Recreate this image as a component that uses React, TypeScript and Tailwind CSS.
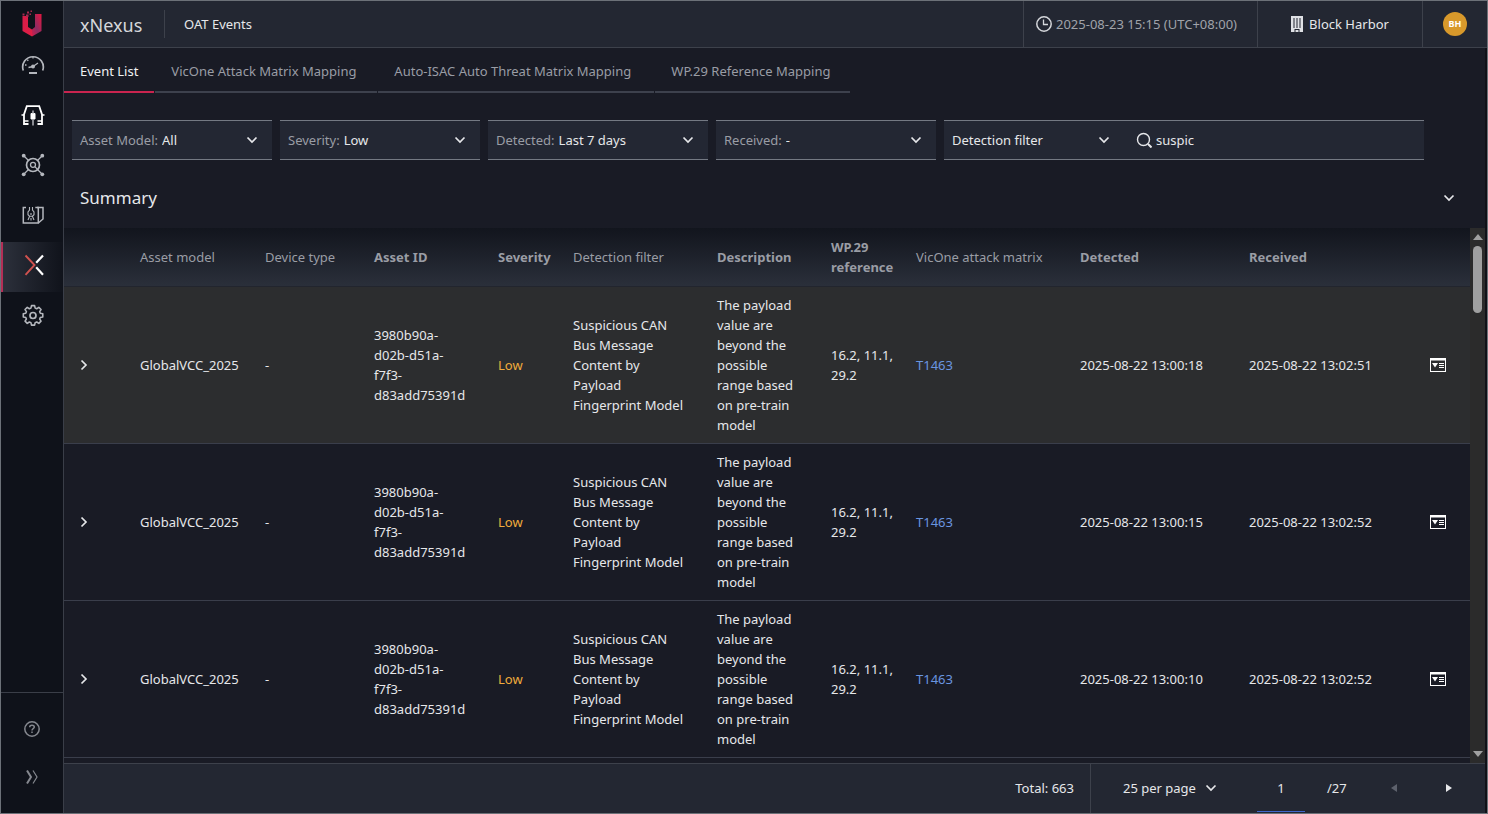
import { useState } from 'react';
import type { ReactNode } from 'react';

interface OatEvent {
  id: number;
  model: string;
  device: string;
  assetId: string;
  severity: string;
  filter: string;
  description: string;
  wp29: string;
  matrix: string;
  detected: string;
  received: string;
}

const BASE_EVENT = {
  model: 'GlobalVCC_2025',
  device: '-',
  assetId: '3980b90a-d02b-d51a-f7f3-d83add75391d',
  severity: 'Low',
  filter: 'Suspicious CAN Bus Message Content by Payload Fingerprint Model',
  description: 'The payload value are beyond the possible range based on pre-train model',
  wp29: '16.2, 11.1, 29.2',
  matrix: 'T1463',
};

const EVENTS: OatEvent[] = [
  { id: 1, ...BASE_EVENT, detected: '2025-08-22 13:00:18', received: '2025-08-22 13:02:51' },
  { id: 2, ...BASE_EVENT, detected: '2025-08-22 13:00:15', received: '2025-08-22 13:02:52' },
  { id: 3, ...BASE_EVENT, detected: '2025-08-22 13:00:10', received: '2025-08-22 13:02:52' },
];

const TABS = [
  { name: 'Event List', width: 'min-w-[90px]' },
  { name: 'VicOne Attack Matrix Mapping', width: 'min-w-[222px]' },
  { name: 'Auto-ISAC Auto Threat Matrix Mapping', width: 'min-w-[276px]' },
  { name: 'WP.29 Reference Mapping', width: 'min-w-[195px]' },
];

const COLUMNS = [
  { label: '', width: 'w-[68px]', bold: false },
  { label: 'Asset model', width: 'w-[125px]', bold: false },
  { label: 'Device type', width: 'w-[109px]', bold: false },
  { label: 'Asset ID', width: 'w-[124px]', bold: true },
  { label: 'Severity', width: 'w-[75px]', bold: true },
  { label: 'Detection filter', width: 'w-[144px]', bold: false },
  { label: 'Description', width: 'w-[114px]', bold: true },
  { label: 'WP.29 reference', width: 'w-[85px]', bold: true },
  { label: 'VicOne attack matrix', width: 'w-[164px]', bold: false },
  { label: 'Detected', width: 'w-[169px]', bold: true },
  { label: 'Received', width: 'w-[181px]', bold: true },
  { label: '', width: 'w-[48px]', bold: false },
];

function Chevron({ className = '' }: { className?: string }) {
  return (
    <svg viewBox="0 0 12 12" className={`size-3 shrink-0 ${className}`} fill="none" stroke="currentColor" strokeWidth="1.7">
      <path d="M1.5 3.5 6 8l4.5-4.5" />
    </svg>
  );
}

function Logo() {
  return (
    <svg viewBox="0 0 20 27" className="h-[27px] w-5">
      <defs>
        <linearGradient id="logo-left" x1="0" y1="0" x2="1" y2="1">
          <stop offset="0" stopColor="#d91c48" />
          <stop offset="1" stopColor="#e01f45" />
        </linearGradient>
        <linearGradient id="logo-right" x1="1" y1="0" x2="0" y2="1">
          <stop offset="0" stopColor="#e5173f" />
          <stop offset="0.6" stopColor="#8c2c63" />
          <stop offset="1" stopColor="#d91c48" />
        </linearGradient>
      </defs>
      <path d="M0.5 6H6v11l4 2.500V26.500L0.500 21z" fill="url(#logo-left)" />
      <path d="M13 4h6.500v17L10 26.500v-7l3-2.500z" fill="url(#logo-right)" />
      <path d="M0.5 3.5h2v2h-2zM4 4.500h2.500V7H4zM5 1.500h2v2H5zM8.500 0.500H10V2H8.500zM7.500 3.500H9V5H7.500z" fill="#a82a50" />
    </svg>
  );
}

function GaugeIcon() {
  return (
    <svg viewBox="0 0 24 24" className="size-6" fill="none" stroke="currentColor" strokeWidth="1.7">
      <path d="M2.3 17.500A10.300 10.300 0 1 1 21.700 17.500" />
      <path d="m12 13.500 5-3.500M7.500 14.500l4.500-1M4 12h1.500M12 4v1.500M6.300 6.800l1 1" strokeWidth="1.3" />
      <circle cx="12" cy="13.500" r="2" fill="currentColor" stroke="none" />
      <path d="M8 20h8" strokeWidth="2" />
    </svg>
  );
}

function VehicleIcon() {
  return (
    <svg viewBox="0 0 24 24" className="size-6 text-white" fill="none" stroke="currentColor" strokeWidth="1.8">
      <path d="M7.500 21H3v-9.500L5.800 3.200h12.400L21 11.500V21h-4.500" />
      <path d="M0.500 12H3M21 12h2.500M3 18h4.500M16.500 18H21" strokeWidth="1.7" />
      <path d="M10 10.500h4v5.500h-4z" fill="currentColor" strokeWidth="1" />
      <path d="M12 7.500v3M12 16v6.500" strokeWidth="1.6" stroke="#a7a9af" />
    </svg>
  );
}

function NetworkIcon() {
  return (
    <svg viewBox="0 0 24 24" className="size-6" fill="none" stroke="currentColor" strokeWidth="1.3">
      <circle cx="12" cy="12" r="6.500" strokeWidth="1.7" />
      <circle cx="12" cy="11.800" r="2.500" />
      <path d="m13.800 13.600 3 3M3 3l4.500 4.500M21 3l-4.500 4.500M3 21l4.500-4.500M21 21l-4.500-4.500" />
      <g fill="currentColor" stroke="none">
        <circle cx="2.700" cy="2.700" r="1.900" />
        <circle cx="21.300" cy="2.700" r="1.900" />
        <circle cx="2.700" cy="21.300" r="1.900" />
        <circle cx="21.300" cy="21.300" r="1.900" />
      </g>
    </svg>
  );
}

function ReportIcon() {
  return (
    <svg viewBox="0 0 24 24" className="size-6" fill="none" stroke="currentColor" strokeWidth="1.5">
      <path d="M5 4.500H2.300V20h15V4.500h-3" />
      <path d="M16 4.500h6V16l-4.700 4" />
      <path d="M8.500 4v3L7 9v2.700l1.500 1.500h3l1.500-1.500V9l-1.500-2V4M10 10v2M8.500 13.500 7 17M11.500 13.500 13 17M10 15v2.500" strokeWidth="1.1" />
    </svg>
  );
}

function NexusIcon() {
  return (
    <svg viewBox="0 0 24 24" className="size-6" fill="none" strokeWidth="1.9">
      <path d="M4.500 2.500 13.500 12l-9 9.800" stroke="#d0524f" />
      <path d="M22 2.500 15.200 9.800M15.200 14.300 22 21.800" stroke="#fff" strokeWidth="2.2" />
    </svg>
  );
}

function GearIcon() {
  return (
    <svg viewBox="0 0 24 24" className="size-6" fill="none" stroke="currentColor" strokeWidth="1.7" strokeLinejoin="round">
      <path d="M10.300 2.300h3.400l.6 2.700 1.700.7 2.300-1.500 2.400 2.400-1.500 2.300.7 1.700 2.700.6v3.400l-2.700.6-.7 1.700 1.500 2.300-2.400 2.400-2.300-1.500-1.700.7-.6 2.700h-3.400l-.6-2.700-1.700-.7-2.300 1.500-2.400-2.400 1.500-2.300-.7-1.700-2.700-.6v-3.400l2.700-.6.7-1.700-1.500-2.300 2.400-2.400 2.300 1.500 1.700-.7z" transform="translate(1 0.500) scale(0.920)" />
      <circle cx="12" cy="12.500" r="3" />
    </svg>
  );
}

function DetailIcon() {
  return (
    <svg viewBox="0 0 16 14" className="h-3.5 w-4">
      <path d="M0 0h16v14H0zM1 2.500V13h14V2.500z" fill="currentColor" fillRule="evenodd" />
      <path d="M2 5h6L5 9.500z" fill="currentColor" />
      <path d="M9 5h5v1H9zM9 7h5v1H9zM9 9h5v1H9z" fill="currentColor" />
    </svg>
  );
}

const NAV = [
  { label: 'Dashboard', icon: <GaugeIcon /> },
  { label: 'Vehicles', icon: <VehicleIcon /> },
  { label: 'Investigation', icon: <NetworkIcon /> },
  { label: 'Reports', icon: <ReportIcon /> },
  { label: 'xNexus', icon: <NexusIcon /> },
  { label: 'Settings', icon: <GearIcon /> },
];

function Sidebar() {
  return (
    <aside className="flex w-[63px] shrink-0 flex-col border-r border-[#3a3e48] bg-[#0f121a] text-[#b4b7bd]">
      <div className="flex h-[41px] items-center justify-center pt-1">
        <Logo />
      </div>
      <nav className="flex flex-1 flex-col">
        {NAV.map((item) => (
          <button
            key={item.label}
            type="button"
            aria-label={item.label}
            className={`flex h-[50px] items-center justify-center border-l-2 pb-1 ${
              item.label === 'xNexus'
                ? 'border-[#b32f56] bg-linear-to-r from-[#2c303b] to-[#10131b]'
                : 'border-transparent'
            }`}
          >
            {item.icon}
          </button>
        ))}
      </nav>
      <div className="flex h-[121px] flex-col items-center border-t border-[#3a3e48] pt-3 text-[#85888f]">
        <button type="button" aria-label="Help" className="flex size-12 items-center justify-center">
          <svg viewBox="0 0 16 16" className="size-4" fill="none" stroke="currentColor" strokeWidth="1.5">
            <circle cx="8" cy="8" r="7.200" />
            <path d="M5.700 6.300C5.700 5 6.700 4.200 8 4.200s2.300.8 2.300 1.900c0 1.500-2.300 1.600-2.300 3.300M8 10.500V12" />
          </svg>
        </button>
        <button type="button" aria-label="Expand menu" className="flex size-12 items-center justify-center">
          <svg viewBox="0 0 14 14" className="size-3.5" fill="none" stroke="currentColor" strokeWidth="1.2">
            <path d="m2 0.500 4 6.500-4 6.500" strokeWidth="2" />
            <path d="m8 0.500 4 6.500-4 6.500" />
          </svg>
        </button>
      </div>
    </aside>
  );
}

function TopBar() {
  return (
    <header className="flex h-[47px] shrink-0 items-stretch border-b border-[#3d414b] bg-[#232732] text-[#e6e7ea]">
      <div className="flex items-center pl-4">
        <h1 className="w-[84px] pt-0.5 text-[18px] text-[#d5d7db]">xNexus</h1>
        <div className="h-7 w-px bg-[#3d414b]" />
        <span className="pl-[19px]">OAT Events</span>
      </div>
      <div className="ml-auto flex w-[234px] items-center gap-1 border-l border-[#3d414b] pl-3">
        <svg viewBox="0 0 16 16" className="size-4 shrink-0 text-[#d5d7db]" fill="none" stroke="currentColor" strokeWidth="1.5">
          <circle cx="8" cy="8" r="7.200" />
          <path d="M7.500 3.500V8.500H12" strokeWidth="1.3" />
        </svg>
        <time className="whitespace-nowrap text-[#a0a3aa]">2025-08-23 15:15 (UTC+08:00)</time>
      </div>
      <button type="button" className="flex w-[165px] items-center justify-center gap-1.5 border-l border-[#3d414b]">
        <svg viewBox="0 0 12 16" className="h-4 w-3">
          <path d="M0 0h12v16H8.500v-3h-5v3H0zM2.500 2v10h1V2zM5.500 2v10h1V2zM8.500 2v10h1V2z" fill="#dfe1e5" fillRule="evenodd" />
          <path d="M4.500 14h3v2h-3z" fill="#dfe1e5" />
        </svg>
        <span>Block Harbor</span>
      </button>
      <div className="flex w-[65px] items-center justify-center border-l border-[#3d414b]">
        <button type="button" className="size-6 rounded-full bg-[#d8992b] text-[9px] font-bold text-white">
          BH
        </button>
      </div>
    </header>
  );
}

function FilterSelect({ id, label, value, width }: { id: string; label: string; value: string; width: string }) {
  return (
    <div className={`relative flex items-center gap-1 border-y border-[#747983] bg-[#232733] pl-2 ${width}`}>
      <label htmlFor={id} className="whitespace-nowrap text-[#9a9da5]">{label}</label>
      <select id={id} defaultValue={value} className="min-w-0 flex-1 appearance-none self-stretch bg-transparent pr-8 outline-none">
        <option>{value}</option>
      </select>
      <Chevron className="pointer-events-none absolute right-3.5" />
    </div>
  );
}

function Filters() {
  const [query, setQuery] = useState('suspic');

  return (
    <div className="flex h-10 shrink-0 gap-2 px-2">
      <FilterSelect id="asset-model" label="Asset Model:" value="All" width="w-[200px]" />
      <FilterSelect id="severity" label="Severity:" value="Low" width="w-[200px]" />
      <FilterSelect id="detected" label="Detected:" value="Last 7 days" width="w-[220px]" />
      <FilterSelect id="received" label="Received:" value="-" width="w-[220px]" />
      <div className="flex w-[480px] items-center border-y border-[#747983] bg-[#232733]">
        <div className="relative flex w-[180px] items-center self-stretch">
          <select aria-label="Search field" defaultValue="Detection filter" className="w-full appearance-none self-stretch bg-transparent pr-8 pl-2 outline-none">
            <option>Detection filter</option>
          </select>
          <Chevron className="pointer-events-none absolute right-3.5" />
        </div>
        <svg viewBox="0 0 16 16" className="mr-1 ml-3 size-4 shrink-0" fill="none" stroke="currentColor" strokeWidth="1.4">
          <circle cx="7.500" cy="7.500" r="6" />
          <path d="m12 12 3.500 3.500" strokeWidth="2" />
        </svg>
        <input
          type="text"
          aria-label="Search events"
          value={query}
          onChange={(e) => setQuery(e.target.value)}
          className="min-w-0 flex-1 self-stretch bg-transparent outline-none"
        />
      </div>
    </div>
  );
}

function Cell({ children, className = 'pr-6' }: { children?: ReactNode; className?: string }) {
  return <td className={`py-2 pl-2 align-middle ${className}`}>{children}</td>;
}

function EventTable() {
  return (
    <table className="w-full table-fixed border-separate border-spacing-0 text-left">
      <colgroup>
        {COLUMNS.map((col, i) => (
          <col key={i} className={col.width} />
        ))}
      </colgroup>
      <thead>
        <tr className="h-[59px] bg-linear-to-b from-[#12151d] to-[#2b303b] text-[#9a9da5]">
          {COLUMNS.map((col, i) => (
            <th
              key={i}
              scope="col"
              className={`border-b border-[#22252e] pl-2 ${col.bold ? 'font-bold' : 'font-normal'}`}
            >
              {col.label}
            </th>
          ))}
        </tr>
      </thead>
      <tbody className="[&_td]:border-b [&_td]:border-[#3a3e4b]">
        {EVENTS.map((event) => (
          <tr key={event.id} className={event.id === 1 ? 'bg-[#2c2d2f]' : ''}>
            <Cell>
              <button type="button" aria-label="Expand row" className="flex size-6 items-center justify-center">
                <Chevron className="-rotate-90" />
              </button>
            </Cell>
            <Cell className="pr-2">{event.model}</Cell>
            <Cell>{event.device}</Cell>
            <Cell className="pr-5">{event.assetId}</Cell>
            <Cell className="pr-2 text-[#efab3c]">{event.severity}</Cell>
            <Cell>{event.filter}</Cell>
            <Cell>{event.description}</Cell>
            <Cell className="pr-2">{event.wp29}</Cell>
            <Cell>
              <a href="#matrix" className="text-[#6a96e0]">{event.matrix}</a>
            </Cell>
            <Cell>{event.detected}</Cell>
            <Cell>{event.received}</Cell>
            <Cell className="pr-2">
              <button type="button" aria-label="Event details" className="flex text-white">
                <DetailIcon />
              </button>
            </Cell>
          </tr>
        ))}
      </tbody>
    </table>
  );
}

function ScrollTrack() {
  return (
    <div className="flex w-[15px] shrink-0 flex-col items-center bg-[#2b2b2b] py-1.5" aria-hidden="true">
      <svg viewBox="0 0 10 6" className="h-1.5 w-2.5 fill-[#9f9f9f]">
        <path d="M0 6h10L5 0z" />
      </svg>
      <div className="mt-1.5 h-[67px] w-[9px] rounded-full bg-[#9f9f9f]" />
      <svg viewBox="0 0 10 6" className="mt-auto h-1.5 w-2.5 fill-[#9f9f9f]">
        <path d="M0 0h10L5 6z" />
      </svg>
    </div>
  );
}

function Pagination() {
  const [page, setPage] = useState('1');

  return (
    <footer className="flex h-[50px] shrink-0 items-stretch justify-end border-t border-[#3d414b] bg-[#232732]">
      <div className="flex items-center border-r border-[#3d414b] pr-4 pb-0.5">Total: 663</div>
      <div className="relative flex w-[134px] items-center pb-0.5">
        <select aria-label="Rows per page" defaultValue="25 per page" className="w-full appearance-none self-stretch bg-transparent pl-8 outline-none">
          <option>25 per page</option>
        </select>
        <Chevron className="pointer-events-none absolute right-2" />
      </div>
      <input
        type="text"
        aria-label="Page"
        value={page}
        onChange={(e) => setPage(e.target.value)}
        className="mb-px ml-8 w-12 border-b border-[#3f66cc] bg-transparent text-center outline-none"
      />
      <span className="flex w-[61px] items-center pb-0.5 pl-[22px]">/27</span>
      <button type="button" aria-label="Previous page" disabled className="flex w-[55px] items-center justify-center pb-0.5 text-[#5d616c]">
        <svg viewBox="0 0 6 8" className="h-2 w-1.5 fill-current">
          <path d="M6 0v8L0 4z" />
        </svg>
      </button>
      <button type="button" aria-label="Next page" className="mr-[9px] flex w-[55px] items-center justify-center pb-0.5">
        <svg viewBox="0 0 6 8" className="h-2 w-1.5 fill-current">
          <path d="M0 0v8l6-4z" />
        </svg>
      </button>
    </footer>
  );
}

export default function App() {
  const [tab, setTab] = useState(TABS[0].name);

  return (
    <div className="flex h-screen overflow-hidden border border-[#6c7178] bg-[#191b25] font-['Noto_Sans',sans-serif] text-[13px] leading-5 text-[#e6e7ea]">
      <Sidebar />
      <div className="flex min-w-0 flex-1 flex-col">
        <TopBar />
        <div className="flex min-h-0 flex-1 flex-col border-r-2 border-[#101117]">
          <div role="tablist" className="flex shrink-0 gap-px">
            {TABS.map(({ name, width }) => (
              <button
                key={name}
                type="button"
                role="tab"
                aria-selected={tab === name}
                onClick={() => setTab(name)}
                className={`h-[45px] border-b-2 px-4 pt-0.5 text-left ${width} ${
                  tab === name ? 'border-[#c9244f] text-[#f0f1f3]' : 'border-[#3d414d] text-[#9a9da5]'
                }`}
              >
                {name}
              </button>
            ))}
          </div>
          <div className="shrink-0 pt-[27px]">
            <Filters />
          </div>
          <div className="flex h-[68px] shrink-0 items-center justify-between pt-4 pr-6 pb-2 pl-4">
            <h2 className="text-[17px]">Summary</h2>
            <button type="button" aria-label="Toggle summary" className="flex size-6 items-center justify-center">
              <Chevron />
            </button>
          </div>
          <div className="flex min-h-0 flex-1">
            <div className="min-w-0 flex-1 overflow-hidden">
              <EventTable />
            </div>
            <ScrollTrack />
          </div>
          <Pagination />
        </div>
      </div>
    </div>
  );
}
